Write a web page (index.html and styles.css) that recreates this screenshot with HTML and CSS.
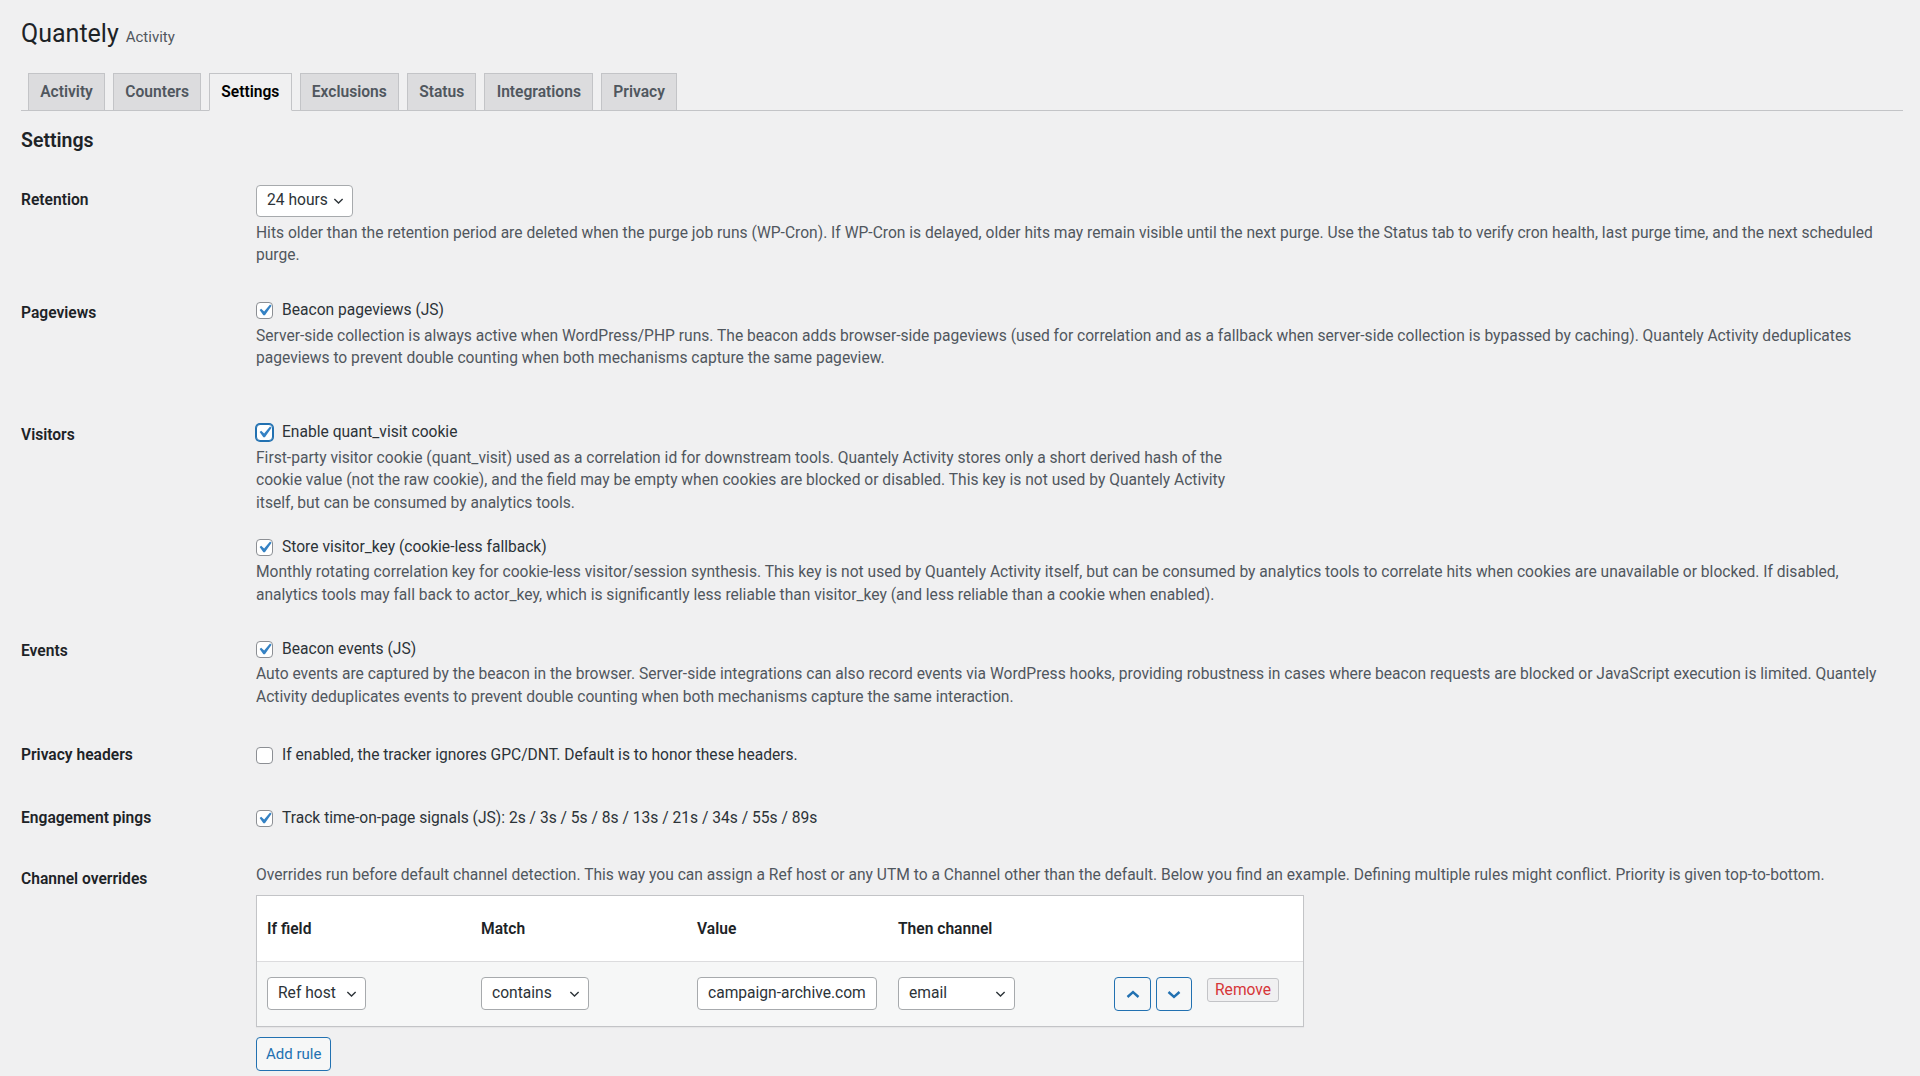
FILE: index.html
```html
<!DOCTYPE html>
<html lang="en">
<head>
<meta charset="utf-8">
<title>Quantely Activity – Settings</title>
<link rel="stylesheet" href="styles.css">
</head>
<body>
<div class="wrap">
  <h1 class="title">Quantely <span class="title-sub">Activity</span></h1>

  <nav class="tabs">
    <a class="tab">Activity</a>
    <a class="tab">Counters</a>
    <a class="tab tab-active">Settings</a>
    <a class="tab">Exclusions</a>
    <a class="tab">Status</a>
    <a class="tab">Integrations</a>
    <a class="tab">Privacy</a>
  </nav>

  <h2 class="section-title">Settings</h2>

  <div class="form">
    <div class="row">
      <div class="th th-select">Retention</div>
      <div class="td">
        <div class="select select-retention"><span>24 hours</span><svg class="chev" viewBox="0 0 12 8"><path d="M1.5 1.8l4.5 4.4 4.5-4.4"/></svg></div>
        <p class="desc desc-after-select">Hits older than the retention period are deleted when the purge job runs (WP-Cron). If WP-Cron is delayed, older hits may remain visible until the next purge. Use the Status tab to verify cron health, last purge time, and the next scheduled<br>purge.</p>
      </div>
    </div>

    <div class="row row-gap-sm">
      <div class="th">Pageviews</div>
      <div class="td">
        <label class="checkline"><span class="cb cb-on"><svg viewBox="0 0 20 20"><path d="M14.83 4.89l1.34.94-5.81 8.38H9.02L5.78 9.67l1.34-1.25 2.57 2.4z"/></svg></span>Beacon pageviews (JS)</label>
        <p class="desc">Server-side collection is always active when WordPress/PHP runs. The beacon adds browser-side pageviews (used for correlation and as a fallback when server-side collection is bypassed by caching). Quantely Activity deduplicates<br>pageviews to prevent double counting when both mechanisms capture the same pageview.</p>
      </div>
    </div>

    <div class="row row-gap-lg">
      <div class="th">Visitors</div>
      <div class="td">
        <label class="checkline"><span class="cb cb-on cb-focus"><svg viewBox="0 0 20 20"><path d="M14.83 4.89l1.34.94-5.81 8.38H9.02L5.78 9.67l1.34-1.25 2.57 2.4z"/></svg></span>Enable quant_visit cookie</label>
        <p class="desc">First-party visitor cookie (quant_visit) used as a correlation id for downstream tools. Quantely Activity stores only a short derived hash of the<br>cookie value (not the raw cookie), and the field may be empty when cookies are blocked or disabled. This key is not used by Quantely Activity<br>itself, but can be consumed by analytics tools.</p>
        <div class="sub-option">
          <label class="checkline"><span class="cb cb-on"><svg viewBox="0 0 20 20"><path d="M14.83 4.89l1.34.94-5.81 8.38H9.02L5.78 9.67l1.34-1.25 2.57 2.4z"/></svg></span>Store visitor_key (cookie-less fallback)</label>
          <p class="desc">Monthly rotating correlation key for cookie-less visitor/session synthesis. This key is not used by Quantely Activity itself, but can be consumed by analytics tools to correlate hits when cookies are unavailable or blocked. If disabled,<br>analytics tools may fall back to actor_key, which is significantly less reliable than visitor_key (and less reliable than a cookie when enabled).</p>
        </div>
      </div>
    </div>

    <div class="row">
      <div class="th">Events</div>
      <div class="td">
        <label class="checkline"><span class="cb cb-on"><svg viewBox="0 0 20 20"><path d="M14.83 4.89l1.34.94-5.81 8.38H9.02L5.78 9.67l1.34-1.25 2.57 2.4z"/></svg></span>Beacon events (JS)</label>
        <p class="desc">Auto events are captured by the beacon in the browser. Server-side integrations can also record events via WordPress hooks, providing robustness in cases where beacon requests are blocked or JavaScript execution is limited. Quantely<br>Activity deduplicates events to prevent double counting when both mechanisms capture the same interaction.</p>
      </div>
    </div>

    <div class="row row-gap-md row-single">
      <div class="th">Privacy headers</div>
      <div class="td">
        <label class="checkline"><span class="cb"></span>If enabled, the tracker ignores GPC/DNT. Default is to honor these headers.</label>
      </div>
    </div>

    <div class="row row-gap-mdl row-single">
      <div class="th">Engagement pings</div>
      <div class="td">
        <label class="checkline"><span class="cb cb-on"><svg viewBox="0 0 20 20"><path d="M14.83 4.89l1.34.94-5.81 8.38H9.02L5.78 9.67l1.34-1.25 2.57 2.4z"/></svg></span>Track time-on-page signals (JS): 2s / 3s / 5s / 8s / 13s / 21s / 34s / 55s / 89s</label>
      </div>
    </div>

    <div class="row row-gap-channel">
      <div class="th th-desc">Channel overrides</div>
      <div class="td">
        <p class="desc">Overrides run before default channel detection. This way you can assign a Ref host or any UTM to a Channel other than the default. Below you find an example. Defining multiple rules might conflict. Priority is given top-to-bottom.</p>
        <div class="rules">
          <div class="rules-grid rules-head">
            <div class="cell">If field</div>
            <div class="cell">Match</div>
            <div class="cell">Value</div>
            <div class="cell">Then channel</div>
            <div class="cell"></div>
          </div>
          <div class="rules-grid rules-row">
            <div class="cell"><div class="select select-field"><span>Ref host</span><svg class="chev" viewBox="0 0 12 8"><path d="M1.5 1.8l4.5 4.4 4.5-4.4"/></svg></div></div>
            <div class="cell"><div class="select select-match"><span>contains</span><svg class="chev" viewBox="0 0 12 8"><path d="M1.5 1.8l4.5 4.4 4.5-4.4"/></svg></div></div>
            <div class="cell"><div class="input">campaign-archive.com</div></div>
            <div class="cell"><div class="select select-channel"><span>email</span><svg class="chev" viewBox="0 0 12 8"><path d="M1.5 1.8l4.5 4.4 4.5-4.4"/></svg></div></div>
            <div class="cell actions">
              <button class="icon-btn" type="button" aria-label="Move up"><svg viewBox="0 0 16 11"><path d="M2.5 8l5.5-5 5.5 5"/></svg></button>
              <button class="icon-btn" type="button" aria-label="Move down"><svg viewBox="0 0 16 11"><path d="M2.5 3l5.5 5 5.5-5"/></svg></button>
              <button class="remove-btn" type="button">Remove</button>
            </div>
          </div>
        </div>
        <button class="add-btn" type="button">Add rule</button>
      </div>
    </div>
  </div>
</div>
</body>
</html>
```

FILE: styles.css
```css
* { box-sizing: border-box; }

body {
  margin: 0;
  background: #f0f0f1;
  color: #3c434a;
  font-family: Roboto, "Liberation Sans", Arial, sans-serif;
  font-size: 15.6px;
  line-height: 22.5px;
}

.wrap {
  padding: 0 17px 40px 21px;
}

.title {
  display: flex;
  align-items: baseline;
  height: 34px;
  margin: 17px 0 0;
  font-size: 25px;
  font-weight: 400;
  line-height: 34px;
  color: #1d2327;
}

.title-sub {
  margin-left: 7px;
  font-size: 15px;
  line-height: 20px;
  color: #50575e;
}

.tabs {
  display: flex;
  gap: 8px;
  margin-top: 22px;
  padding-left: 7px;
  border-bottom: 1px solid #c3c4c7;
}

.tab {
  display: block;
  margin-bottom: -1px;
  padding: 6px 11.2px;
  border: 1px solid #c3c4c7;
  background: #dcdcde;
  color: #50575e;
  font-size: 15.6px;
  font-weight: 600;
  line-height: 24px;
  text-decoration: none;
}

.tab-active {
  background: #f0f0f1;
  color: #000;
  border-bottom-color: #f0f0f1;
}

.section-title {
  margin: 16.5px 0 0;
  font-size: 19.5px;
  font-weight: 600;
  line-height: 26px;
  color: #1d2327;
}

.form {
  margin-top: 31px;
}

.row {
  display: flex;
  margin-top: 29px;
}

.row:first-child { margin-top: 0; }
.row-gap-sm { margin-top: 30px; }
.row-gap-lg { margin-top: 49px; }
.row-gap-md { margin-top: 33px; }
.row-gap-mdl { margin-top: 35px; }
.row-gap-channel { margin-top: 32px; }

.th {
  flex: none;
  width: 235px;
  padding-top: 5px;
  font-weight: 600;
  line-height: 23px;
  color: #1d2327;
}

.th-select { padding-top: 4px; }
.row-single .th { padding-top: 3px; }
.th-desc { padding-top: 4px; }

.td {
  flex: 1;
  min-width: 0;
}

.desc {
  margin: 0;
  color: #50575e;
  line-height: 22.5px;
}

.desc-after-select { margin-top: 5px; }

.checkline {
  display: flex;
  align-items: center;
  gap: 9px;
  height: 28px;
  color: #2c3338;
}

.sub-option { margin-top: 19px; }

.cb {
  flex: none;
  display: inline-flex;
  align-items: center;
  justify-content: center;
  width: 17px;
  height: 17px;
  border: 1px solid #8c8f94;
  border-radius: 4px;
  background: #fff;
  overflow: visible;
}

.cb svg {
  flex: none;
  width: 23px;
  height: 23px;
  fill: #3582c4;
}

.cb-focus {
  border-color: #2271b1;
  box-shadow: 0 0 0 1px #2271b1;
}

.select,
.input {
  display: flex;
  align-items: center;
  justify-content: space-between;
  height: 33px;
  padding: 0 8px 0 10px;
  border: 1px solid #a7aaad;
  border-radius: 4px;
  background: #fff;
  color: #2c3338;
  white-space: nowrap;
}

.chev {
  flex: none;
  width: 11px;
  height: 8px;
  fill: none;
  stroke: #2c3338;
  stroke-width: 1.5;
}

.select-retention { width: 97px; height: 32px; }
.select-field { width: 99px; }
.select-match { width: 108px; }
.select-channel { width: 117px; }
.input { width: 180px; padding-right: 10px; }

.rules {
  width: 1048px;
  margin-top: 8.5px;
  border: 1px solid #c3c4c7;
  background: #fff;
  box-shadow: 0 1px 1px rgba(0, 0, 0, 0.04);
}

.rules-grid {
  display: grid;
  grid-template-columns: 214px 216px 201px 216px 1fr;
}

.cell { padding: 0 10px; }

.rules-head {
  padding: 22px 0 20px;
  font-weight: 600;
  line-height: 23px;
  color: #1d2327;
}

.rules-row {
  padding: 15px 0 15px;
  border-top: 1px solid #dcdcde;
  background: #f6f7f7;
}

.actions {
  display: flex;
  align-items: flex-start;
}

.icon-btn {
  display: flex;
  align-items: center;
  justify-content: center;
  width: 37px;
  height: 34px;
  margin: 0 5px 0 0;
  padding: 0;
  border: 1px solid #2271b1;
  border-radius: 4px;
  background: #f6f7f7;
}

.icon-btn + .icon-btn { width: 36px; margin-right: 15px; }

.icon-btn svg {
  width: 16px;
  height: 11px;
  fill: none;
  stroke: #2271b1;
  stroke-width: 2.4;
}

.remove-btn {
  height: 24px;
  margin-top: 1px;
  padding: 0 7px;
  border: 1px solid #c3c4c7;
  border-radius: 3px;
  background: #f0f0f1;
  color: #d63638;
  font-family: inherit;
  font-size: 15.6px;
  line-height: 22px;
}

.add-btn {
  display: block;
  height: 34px;
  margin-top: 9.5px;
  padding: 0 9px;
  border: 1px solid #2271b1;
  border-radius: 4px;
  background: #f6f7f7;
  color: #2271b1;
  font-family: inherit;
  font-size: 15px;
}
```
